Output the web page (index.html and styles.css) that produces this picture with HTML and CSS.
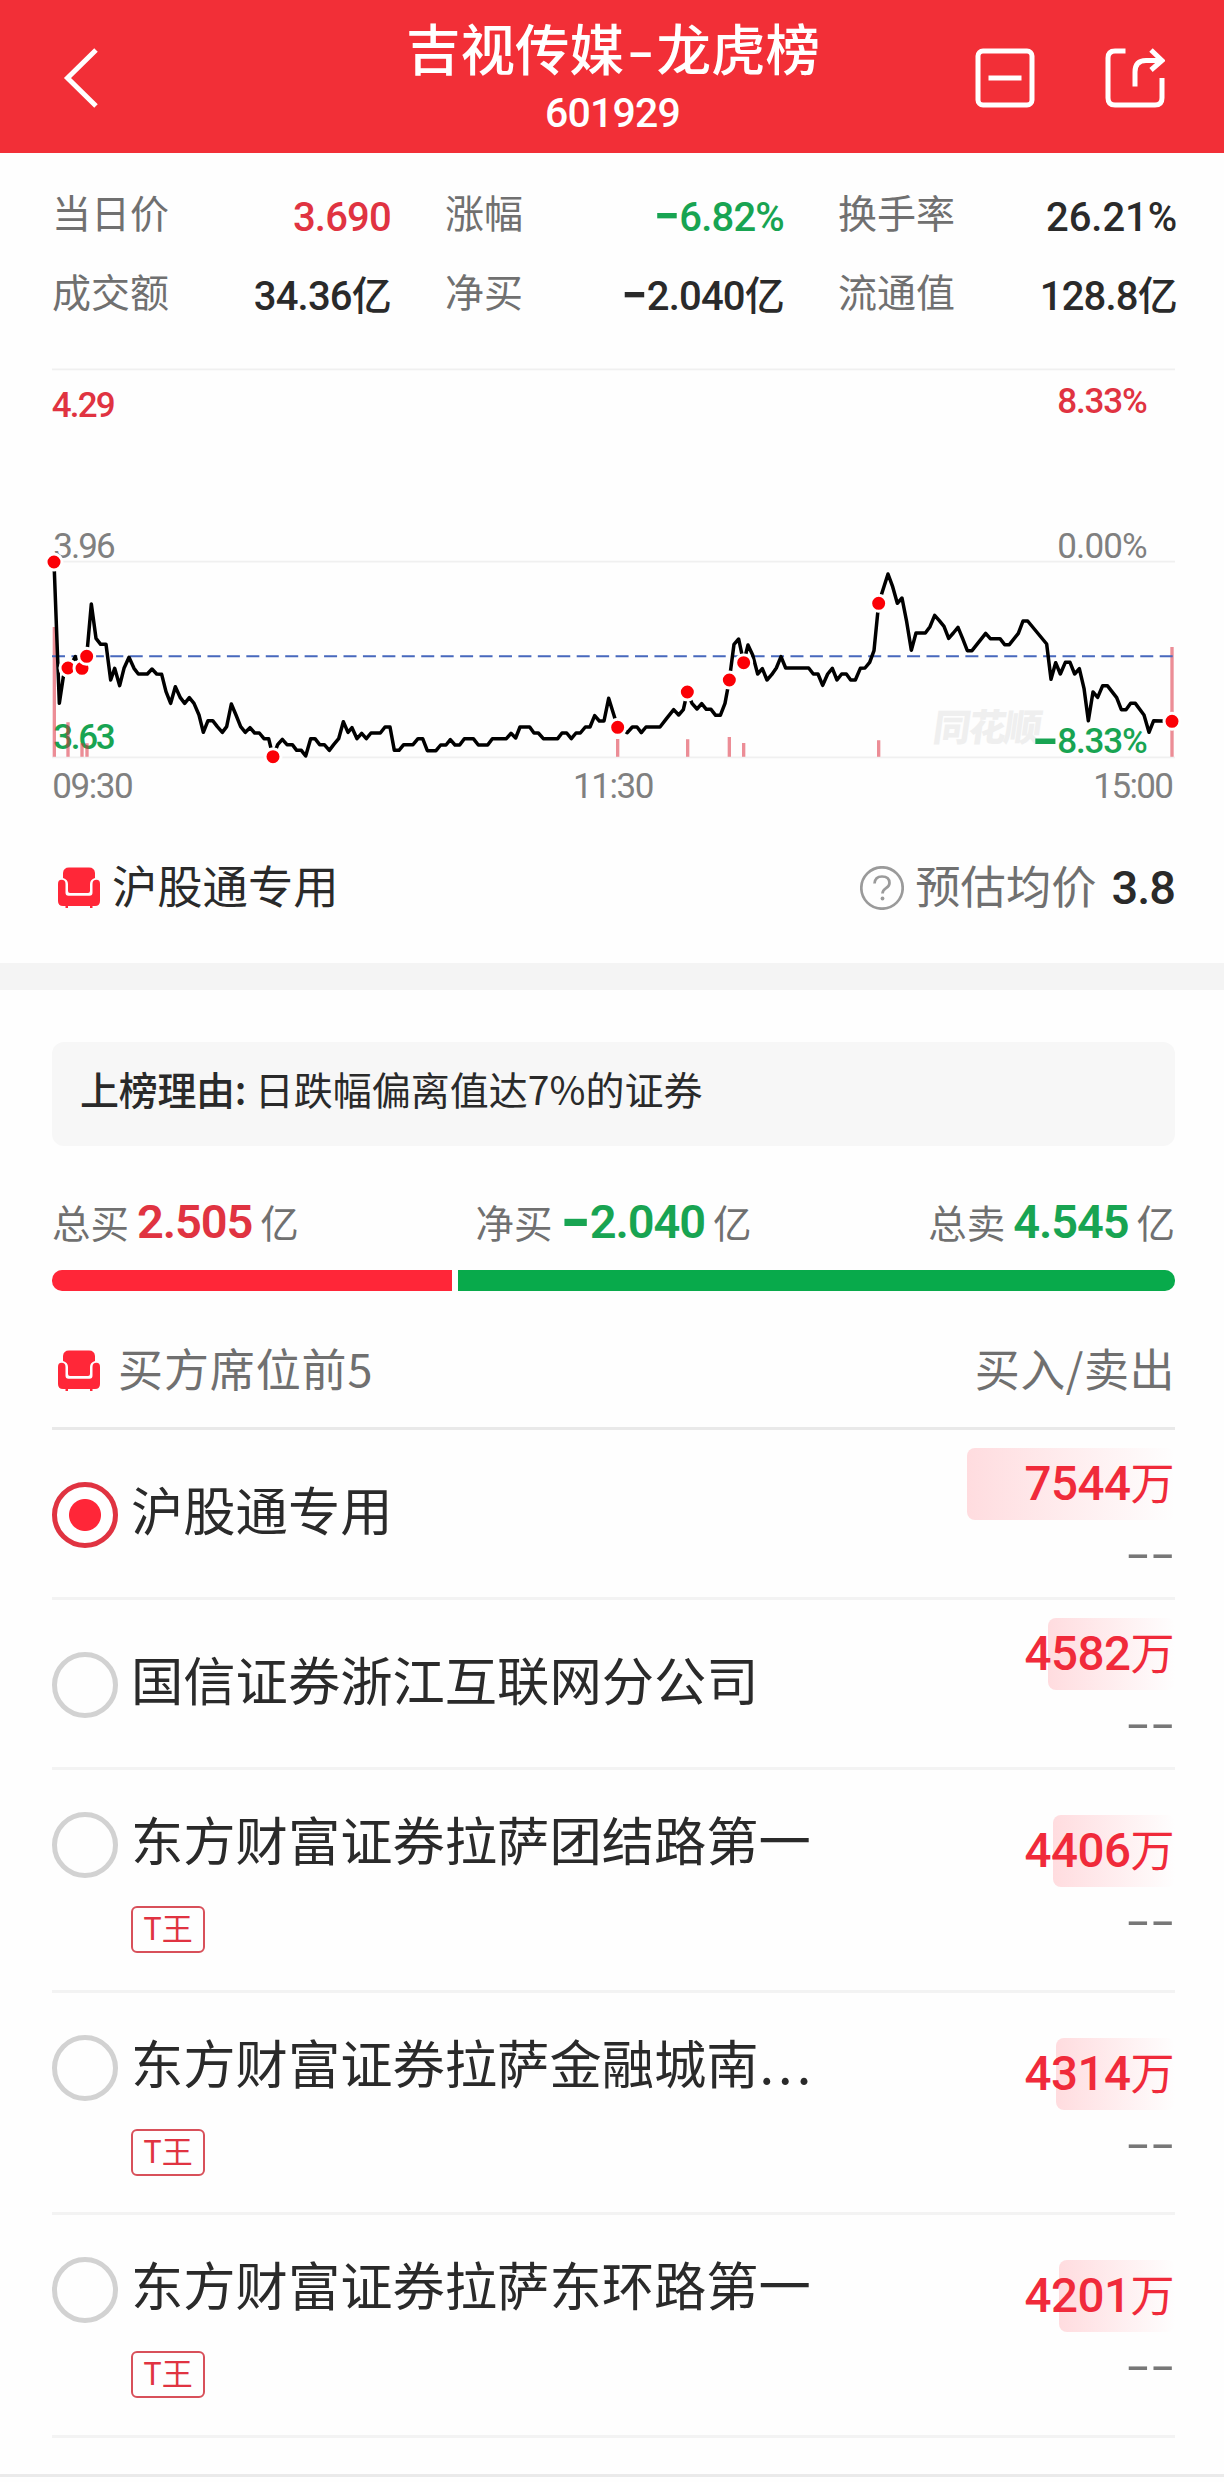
FILE: index.html
```html
<!DOCTYPE html>
<html lang="zh-CN">
<head>
<meta charset="utf-8">
<title>吉视传媒-龙虎榜</title>
<link rel="stylesheet" href="styles.css">
</head>
<body>
<svg width="0" height="0" class="defs" aria-hidden="true">
  <symbol id="seat" viewBox="0 0 42 42">
    <path d="M11 .5H31Q36.500 .5 37 6V11Q32 12.500 32 17V24Q32 26 30 26H12Q10 26 10 24V17Q10 12.500 5 11V6Q5.500 .5 11 .5Z"/>
    <path d="M3.500 12.800Q7.500 12.800 7.500 17V25.500Q7.500 28.700 10.500 28.700H31.500Q34.500 28.700 34.500 25.500V17Q34.500 12.800 38.500 12.800Q42 12.800 42 17V34Q42 39 37 39H34.500V41H32V39H10V41H7.500V39H5Q0 39 0 34V17Q0 12.800 3.500 12.800Z"/>
  </symbol>
</svg>

<header class="topbar">
  <svg class="back" width="40" height="62" viewBox="0 0 40 62"><path d="M34 3L5.500 31L34 59"/></svg>
  <div class="heading">
    <h1>吉视传媒<span class="dash">-</span>龙虎榜</h1>
    <p>601929</p>
  </div>
  <div class="actions">
    <svg width="60" height="60" viewBox="0 0 60 60"><rect x="3" y="3" width="54" height="54" rx="5"/><path d="M13.500 30H46.500"/></svg>
    <svg width="60" height="60" viewBox="0 0 60 60"><path d="M20.500 3H10Q3 3 3 10V50Q3 57 10 57H50Q57 57 57 50V30M30 38.500V24Q30 12.500 41 12.500H56M46 2L57 12.500L46 22"/></svg>
  </div>
</header>

<section class="stats">
  <div class="stat"><span>当日价</span><b class="up">3.690</b></div>
  <div class="stat"><span>涨幅</span><b class="down"><i class="neg">-</i>6.82%</b></div>
  <div class="stat"><span>换手率</span><b class="wide">26.21%</b></div>
  <div class="stat"><span>成交额</span><b>34.36亿</b></div>
  <div class="stat"><span>净买</span><b><i class="neg">-</i>2.040亿</b></div>
  <div class="stat"><span>流通值</span><b>128.8亿</b></div>
</section>

<svg class="chart" width="1224" height="460" viewBox="0 0 3672 1380">
  <g class="grid"><path d="M156 28H3525M156 605H3525M156 1192H3525"/></g>
  <text class="watermark" transform="translate(2795 1142) skewX(-8)" textLength="325">同花顺</text>
  <g class="axis">
    <text class="up" x="155" y="170" textLength="192">4.29</text>
    <text x="160" y="595" textLength="187">3.96</text>
    <text class="down" x="160" y="1167" textLength="187">3.63</text>
    <text class="up" x="3172" y="158" textLength="271">8.33%</text>
    <text x="3172" y="595" textLength="271">0.00%</text>
    <text class="down minus" x="3095" y="1209">-</text>
    <text class="down" x="3172" y="1178" textLength="271">8.33%</text>
    <text x="157" y="1313" textLength="244">09:30</text>
    <text x="1719" y="1313" textLength="244">11:30</text>
    <text x="3280" y="1313" textLength="242">15:00</text>
  </g>
  <path class="volume" d="M163 801V1190M204 1087V1190M246 1150V1190M261 1150V1190M1853 1137V1190M2063 1138V1190M2188 1131V1190M2231 1149V1190M2636 1141V1190M3516 861V1190"/>
  <path class="average" d="M156 889H3522"/>
  <polyline class="price" points="162,606 178,1030 190,950 204,924 218,905 226,890 246,925 260,889 274,732 288,835 302,853 318,853 332,960 344,925 359,977 372,925 387,892 402,925 415,942 442,942 456,927 470,942 485,943 498,995 512,1030 526,980 541,1013 554,1030 568,1013 582,1030 597,1065 610,1117 624,1082 638,1082 652,1100 667,1117 680,1100 694,1032 708,1065 722,1100 736,1117 750,1103 764,1119 778,1119 792,1136 806,1136 819,1190 833,1154 847,1138 861,1154 877,1154 890,1171 904,1171 917,1188 932,1136 945,1136 959,1154 973,1154 988,1171 1001,1154 1016,1136 1030,1085 1044,1117 1056,1103 1071,1136 1085,1120 1099,1136 1113,1119 1141,1119 1155,1101 1170,1101 1183,1171 1197,1171 1211,1154 1239,1154 1254,1136 1268,1136 1282,1172 1308,1172 1322,1155 1338,1155 1351,1139 1365,1155 1379,1155 1393,1136 1420,1136 1435,1155 1463,1155 1477,1136 1519,1136 1533,1120 1547,1134 1560,1101 1589,1101 1602,1119 1615,1119 1630,1136 1673,1136 1686,1119 1700,1119 1714,1136 1728,1119 1741,1119 1756,1101 1770,1101 1784,1067 1798,1083 1812,1083 1826,1015 1840,1060 1853,1102 1882,1118 1897,1101 1911,1101 1924,1118 1938,1101 1980,1101 2000,1075 2021,1049 2036,1065 2050,1049 2062,996 2076,1030 2091,1047 2105,1031 2119,1048 2133,1048 2147,1066 2161,1066 2175,1030 2188,960 2202,853 2216,837 2231,908 2244,855 2258,885 2273,942 2287,926 2301,960 2315,944 2329,924 2343,890 2357,924 2426,924 2440,942 2454,942 2468,976 2483,942 2497,925 2511,960 2525,942 2539,942 2552,960 2566,960 2581,925 2595,924 2609,907 2622,872 2636,730 2664,642 2678,680 2692,730 2706,714 2720,785 2734,871 2748,819 2776,819 2790,800 2804,766 2818,782 2832,799 2846,835 2860,819 2874,802 2888,836 2902,872 2916,872 2957,820 2971,836 3000,836 3014,854 3028,854 3055,820 3069,783 3083,783 3140,852 3153,958 3167,908 3181,942 3196,907 3210,907 3224,942 3238,926 3252,985 3265,1082 3279,996 3293,1012 3308,977 3322,977 3350,1013 3364,1049 3378,1049 3392,1030 3406,1030 3432,1065 3447,1117 3461,1082 3516,1084"/>
  <g class="dots">
    <circle cx="162" cy="606" r="24"/><circle cx="204" cy="924" r="24"/><circle cx="246" cy="925" r="24"/><circle cx="260" cy="889" r="24"/><circle cx="819" cy="1190" r="24"/><circle cx="1853" cy="1102" r="24"/><circle cx="2062" cy="996" r="24"/><circle cx="2188" cy="960" r="24"/><circle cx="2231" cy="908" r="24"/><circle cx="2636" cy="730" r="24"/><circle cx="3516" cy="1084" r="24"/>
  </g>
</svg>

<section class="estimate">
  <svg class="seat" width="42" height="42"><use href="#seat"/></svg>
  <span class="estimate-name">沪股通专用</span>
  <svg class="help" width="44" height="44" viewBox="0 0 44 44"><circle cx="22" cy="22" r="20.700"/><path d="M14.500 17.500Q15 10.500 22 10.500Q29.500 10.500 29.500 17Q29.500 20 26 22.200Q22.500 24.500 22.500 27.500"/><circle class="help-dot" cx="22.500" cy="32.500" r="1.900"/></svg>
  <span class="estimate-label">预估均价</span>
  <b class="estimate-value">3.8</b>
</section>

<div class="band"></div>

<main>
  <p class="reason"><b>上榜理由:</b> 日跌幅偏离值达7%的证券</p>

  <div class="totals">
    <div><span>总买</span><b class="up">2.505</b><span>亿</span></div>
    <div><span>净买</span><b class="down"><i class="neg">-</i>2.040</b><span>亿</span></div>
    <div><span>总卖</span><b class="down">4.545</b><span>亿</span></div>
  </div>
  <div class="ratio"><div class="ratio-buy" style="width:399.500px"></div><div class="ratio-sell"></div></div>

  <div class="list-head">
    <svg class="seat" width="42" height="42"><use href="#seat"/></svg>
    <span>买方席位前5</span>
    <span class="list-head-right">买入/卖出</span>
  </div>

  <ul class="list">
    <li class="row short">
      <span class="radio checked"></span>
      <div class="name">沪股通专用</div>
      <div class="amounts"><div class="buy"><span class="fill" style="width:208px"></span><b>7544<em>万</em></b></div><div class="sell"><span>--</span></div></div>
    </li>
    <li class="row short">
      <span class="radio"></span>
      <div class="name">国信证券浙江互联网分公司</div>
      <div class="amounts"><div class="buy"><span class="fill" style="width:127px"></span><b>4582<em>万</em></b></div><div class="sell"><span>--</span></div></div>
    </li>
    <li class="row">
      <span class="radio"></span>
      <div class="name">东方财富证券拉萨团结路第一<span class="tag">T王</span></div>
      <div class="amounts"><div class="buy"><span class="fill" style="width:122px"></span><b>4406<em>万</em></b></div><div class="sell"><span>--</span></div></div>
    </li>
    <li class="row">
      <span class="radio"></span>
      <div class="name">东方财富证券拉萨金融城南<span class="more">...</span><span class="tag">T王</span></div>
      <div class="amounts"><div class="buy"><span class="fill" style="width:119px"></span><b>4314<em>万</em></b></div><div class="sell"><span>--</span></div></div>
    </li>
    <li class="row">
      <span class="radio"></span>
      <div class="name">东方财富证券拉萨东环路第一<span class="tag">T王</span></div>
      <div class="amounts"><div class="buy"><span class="fill" style="width:116px"></span><b>4201<em>万</em></b></div><div class="sell"><span>--</span></div></div>
    </li>
  </ul>
</main>
<div class="bottom-line"></div>
</body>
</html>
```
FILE: styles.css
```css
* { box-sizing: border-box; margin: 0; padding: 0; }
body {
  width: 1224px;
  height: 2482px;
  overflow: hidden;
  background: #fefefe;
  color: #2a2a2a;
  font-family: Roboto, "Noto Sans CJK SC", sans-serif;
}
i, em { font-style: normal; }
b { font-weight: 500; }
.up { color: #e03341; }
.down { color: #18a452; }
.defs { display: block; height: 0; }
.neg {
  font-family: "Noto Sans CJK SC", sans-serif;
  font-size: 1.9em;
  font-weight: 400;
  line-height: 0;
  vertical-align: -.085em;
  letter-spacing: -1px;
}

.topbar {
  display: grid;
  grid-template-columns: 280px 1fr 280px;
  height: 153px;
  padding-top: 14px;
  background: #f22f37;
  color: #fff;
}
.topbar svg { fill: none; stroke: #fff; stroke-width: 5; }
.back { margin: 33px 0 0 62px; }
.heading { text-align: center; }
.heading h1 {
  font: 500 54.500px/66px "Noto Sans CJK SC", sans-serif;
  white-space: nowrap;
  padding-left: 2px;
}
.heading .dash {
  display: inline-block;
  margin: 0 6.500px;
  transform: scaleX(1.4);
}
.heading p { font-size: 41px; line-height: 50px; font-weight: 500; letter-spacing: -.8px; margin-top: 8px; padding-left: 1px; }
.actions { display: flex; gap: 70px; padding-top: 34px; margin-left: 31px; }

.stats {
  display: grid;
  grid-template-columns: repeat(3, 339px);
  column-gap: 54px;
  grid-auto-rows: 79px;
  height: 207px;
  padding: 21px 0 0 52px;
}
.stat { display: flex; justify-content: space-between; line-height: 79px; }
.stat span { font: 400 39px/74px "Noto Sans CJK SC", sans-serif; color: #707070; }
.stat b { font-size: 40px; padding-top: 4px; letter-spacing: -.8px; white-space: nowrap; }
.stat .wide { letter-spacing: -.1px; }

.chart { display: block; }
.grid { stroke: #f0f0f0; stroke-width: 5; }
.axis { font-size: 105px; fill: #808080; }
.axis .up { fill: #e03341; font-weight: 500; }
.axis .down { fill: #18a452; font-weight: 500; }
.axis .minus { font-family: "Noto Sans CJK SC", sans-serif; font-size: 235px; font-weight: 400; }
.watermark { font: 900 112px "Noto Sans CJK SC", sans-serif; fill: #efefef; }
.volume { stroke: #dc2838; stroke-opacity: .53; stroke-width: 10; }
.average { stroke: #4768bd; stroke-width: 6; stroke-dasharray: 39 19.300; }
.price { fill: none; stroke: #000; stroke-width: 10.500; stroke-linejoin: round; }
.dots { fill: #fb0006; stroke: #fff; stroke-width: 9; }

.estimate {
  display: flex;
  align-items: center;
  height: 143px;
  padding: 0 49px 8px 58px;
  font-size: 45px;
}
.seat { fill: #ff2738; flex: none; }
.estimate span { font: 400 45.300px/60px "Noto Sans CJK SC", sans-serif; margin-top: -8px; }
.estimate-name { margin-left: 12px; }
.help { margin-left: auto; fill: none; stroke: #9a9a9a; stroke-width: 2.700; }
.help .help-dot { fill: #9a9a9a; stroke: none; }
.estimate .estimate-label { color: #707070; margin-left: 11px; }
.estimate-value { font-size: 47px; margin-left: 15px; letter-spacing: -1px; }

.band { height: 27px; background: #f4f4f4; }

main { padding: 52px 49px 0 52px; }
.reason {
  height: 104px;
  padding-left: 28px;
  border-radius: 12px;
  background: #f7f7f7;
  font: 400 39px/93px "Noto Sans CJK SC", sans-serif;
}
.reason b { letter-spacing: -.3px; }
.totals { display: flex; justify-content: space-between; height: 124px; line-height: 150px; }
.totals div { display: flex; align-items: baseline; }
.totals span { font: 400 38.500px/150px "Noto Sans CJK SC", sans-serif; color: #707070; }
.totals b { font-size: 47px; font-weight: 600; letter-spacing: -1.100px; margin: 0 8px; }
.totals .neg { font-weight: 500; font-size: 1.8em; vertical-align: -.09em; }
.ratio { display: flex; gap: 6px; height: 21px; }
.ratio-buy { background: #ff2638; border-radius: 10px 0 0 10px; }
.ratio-sell { flex: 1; background: #08aa4b; border-radius: 0 10px 10px 0; }
.list-head {
  display: flex;
  align-items: center;
  height: 139px;
  padding: 23px 0 0 6px;
  border-bottom: 3px solid #e9e9e9;
  font: 400 45px/60px "Noto Sans CJK SC", sans-serif;
  color: #707070;
}
.list-head span { margin: -6px 0 0 18px; letter-spacing: .9px; }
.list-head .list-head-right { margin-left: auto; letter-spacing: .5px; }

.list { list-style: none; }
.row { display: flex; height: 222.500px; border-bottom: 3px solid #f3f3f3; padding-top: 42px; }
.row.short { height: 170px; padding-top: 52px; }
.radio {
  width: 66px;
  height: 66px;
  border: 5px solid #d2d2d2;
  border-radius: 50%;
  flex: none;
}
.radio.checked { border-color: #e03341; background: radial-gradient(circle, #ff2638 15.500px, #fff 16.500px); }
.name {
  flex: 1;
  margin: -1px 0 0 13px;
  font: 400 52.300px/54px "Noto Sans CJK SC", sans-serif;
  white-space: nowrap;
}
.more { letter-spacing: 4px; margin-left: 1px; }
.tag {
  display: block;
  width: 74px;
  height: 47px;
  margin-top: 41px;
  border: 2px solid #d8505a;
  border-radius: 6px;
  color: #e03341;
  font-size: 31px;
  line-height: 38px;
  text-align: center;
}
.amounts { width: 210px; margin-top: 3px; }
.row.short .amounts { margin-top: -34px; }
.buy { display: grid; justify-items: end; height: 72px; }
.buy > * { grid-area: 1 / 1; }
.fill { height: 72px; border-radius: 8px; background: linear-gradient(90deg, #ffdcdf, #fefefe); }
.buy b { color: #f02a3a; font-size: 47.500px; line-height: 73px; letter-spacing: -.5px; margin-right: 1px; }
.buy em { font-size: 44px; font-weight: 400; }
.sell { height: 60px; color: #777; text-align: right; }
.sell span {
  display: inline-block;
  font: 500 42px/60px "Noto Sans CJK SC", sans-serif;
  transform: scaleX(1.65);
  transform-origin: 100% 50%;
}

.bottom-line { height: 3px; margin-top: 36px; background: #eaeaea; }
```
